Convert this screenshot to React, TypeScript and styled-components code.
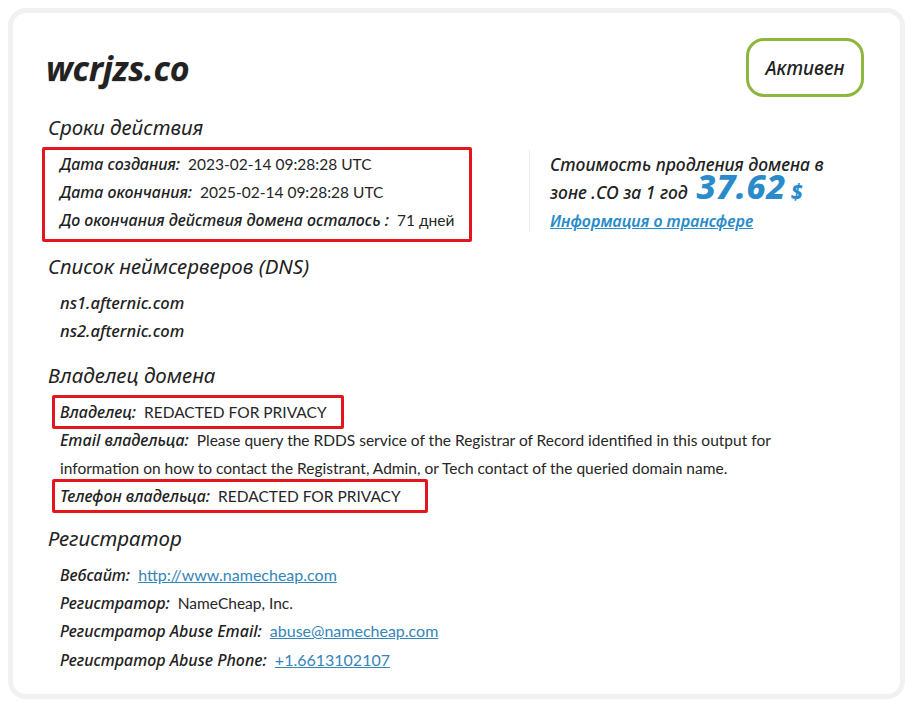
import React from "react";
import styled, { createGlobalStyle } from "styled-components";

const GlobalStyle = createGlobalStyle`
  html, body {
    margin: 0;
    padding: 0;
    background: #ffffff;
  }
  body {
    font-family: "Noto Sans", "Open Sans", sans-serif;
    color: #222;
  }
`;

const Page = styled.div`
  padding: 8px;
`;

const Card = styled.div`
  border: 5px solid #f1f1f1;
  border-radius: 18px;
  background: #fff;
  padding: 25px 36px 20px 33px;
`;

const Header = styled.div`
  display: flex;
  justify-content: space-between;
  align-items: center;
`;

const Title = styled.h1`
  margin: 0;
  font-size: 34px;
  font-style: italic;
  font-weight: 700;
  color: #222;
  letter-spacing: -0.3px;
  text-shadow: 0 1px 1px rgba(0, 0, 0, 0.12);
`;

const Badge = styled.div`
  box-sizing: border-box;
  width: 118px;
  height: 59px;
  border: 3px solid #8cb63c;
  border-radius: 18px;
  display: flex;
  align-items: center;
  justify-content: center;
  font-size: 19px;
  font-style: italic;
  font-weight: 500;
  color: #222;
`;

const Section = styled.section<{ $top: number }>`
  margin-top: ${(p) => p.$top}px;
`;

const Heading = styled.h2`
  margin: 0 0 10px 2px;
  font-size: 20.5px;
  line-height: 26px;
  font-style: italic;
  font-weight: 400;
  color: #222;
`;

const Row = styled.div`
  display: grid;
  grid-template-columns: 483px 1fr;
  align-items: start;
`;

const List = styled.div<{ $line?: number }>`
  padding-left: 14px;
  line-height: ${(p) => p.$line ?? 28}px;
  max-width: 792px;
`;

const Highlight = styled.div<{ $padL: number; $padR: number; $padB?: number }>`
  width: fit-content;
  border: 3px solid #e3151f;
  border-radius: 2px;
  margin: -3px 0 ${(p) => -3 - (p.$padB ?? 0)}px ${(p) => -3 - p.$padL}px;
  padding: 0 ${(p) => p.$padR}px ${(p) => p.$padB ?? 0}px ${(p) => p.$padL}px;
`;

const Item = styled.div``;

const Label = styled.span`
  font-size: 16px;
  font-style: italic;
  font-weight: 500;
  color: #222;
  margin-right: 8px;
`;

const Value = styled.span`
  font-family: Lato, "Noto Sans", sans-serif;
  font-size: 15.5px;
  color: #262626;
`;

const ValueLink = styled.a`
  font-family: Lato, "Noto Sans", sans-serif;
  font-size: 16px;
  color: #3585b8;
  text-decoration: underline;
`;

const Server = styled.div`
  font-size: 16.5px;
  font-style: italic;
  font-weight: 500;
  color: #222;
`;

const PriceBlock = styled.div`
  border-left: 1px solid #ececec;
  padding: 0 0 0 20px;
  width: 300px;
  font-size: 17.5px;
  font-style: italic;
  font-weight: 500;
  color: #222;
  line-height: 28px;
`;

const Price = styled.span`
  font-size: 34px;
  line-height: 0;
  font-weight: 800;
  color: #2a8bcb;
  margin-left: 9px;
  letter-spacing: 0.5px;
`;

const Currency = styled.span`
  font-size: 21px;
  line-height: 0;
  font-weight: 800;
  color: #2a8bcb;
  margin-left: 5px;
`;

const TransferLink = styled.a`
  display: block;
  margin-top: 4px;
  font-size: 16px;
  font-weight: 600;
  color: #2a8bcb;
  text-decoration: underline;
  line-height: 22px;
`;

export default function App() {
  return (
    <>
      <GlobalStyle />
      <Page>
        <Card>
          <Header>
            <Title>wcrjzs.co</Title>
            <Badge>Активен</Badge>
          </Header>

          <Section $top={17}>
            <Heading>Сроки действия</Heading>
            <Row>
              <List>
                <Highlight $padL={15} $padR={15} $padB={5}>
                  <Item>
                    <Label>Дата создания:</Label>
                    <Value>2023-02-14 09:28:28 UTC</Value>
                  </Item>
                  <Item>
                    <Label>Дата окончания:</Label>
                    <Value>2025-02-14 09:28:28 UTC</Value>
                  </Item>
                  <Item>
                    <Label>До окончания действия домена осталось :</Label>
                    <Value>71 дней</Value>
                  </Item>
                </Highlight>
              </List>
              <PriceBlock>
                Стоимость продления домена в зоне .CO за 1 год
                <Price>37.62</Price>
                <Currency>$</Currency>
                <TransferLink href="#">Информация о трансфере</TransferLink>
              </PriceBlock>
            </Row>
          </Section>

          <Section $top={19}>
            <Heading>Список неймсерверов (DNS)</Heading>
            <List>
              <Server>ns1.afternic.com</Server>
              <Server>ns2.afternic.com</Server>
            </List>
          </Section>

          <Section $top={17}>
            <Heading>Владелец домена</Heading>
            <List>
              <Highlight $padL={5} $padR={14}>
                <Label>Владелец:</Label>
                <Value>REDACTED FOR PRIVACY</Value>
              </Highlight>
              <Item>
                <Label>Email владельца:</Label>
                <Value>
                  Please query the RDDS service of the Registrar of Record
                  identified in this output for information on how to contact
                  the Registrant, Admin, or Tech contact of the queried domain
                  name.
                </Value>
              </Item>
              <Highlight $padL={5} $padR={24}>
                <Label>Телефон владельца:</Label>
                <Value>REDACTED FOR PRIVACY</Value>
              </Highlight>
            </List>
          </Section>

          <Section $top={15}>
            <Heading>Регистратор</Heading>
            <List $line={27.5}>
              <Item>
                <Label>Вебсайт:</Label>
                <ValueLink href="#">http://www.namecheap.com</ValueLink>
              </Item>
              <Item>
                <Label>Регистратор:</Label>
                <Value>NameCheap, Inc.</Value>
              </Item>
              <Item>
                <Label>Регистратор Abuse Email:</Label>
                <ValueLink href="#">abuse@namecheap.com</ValueLink>
              </Item>
              <Item>
                <Label>Регистратор Abuse Phone:</Label>
                <ValueLink href="#">+1.6613102107</ValueLink>
              </Item>
            </List>
          </Section>
        </Card>
      </Page>
    </>
  );
}
